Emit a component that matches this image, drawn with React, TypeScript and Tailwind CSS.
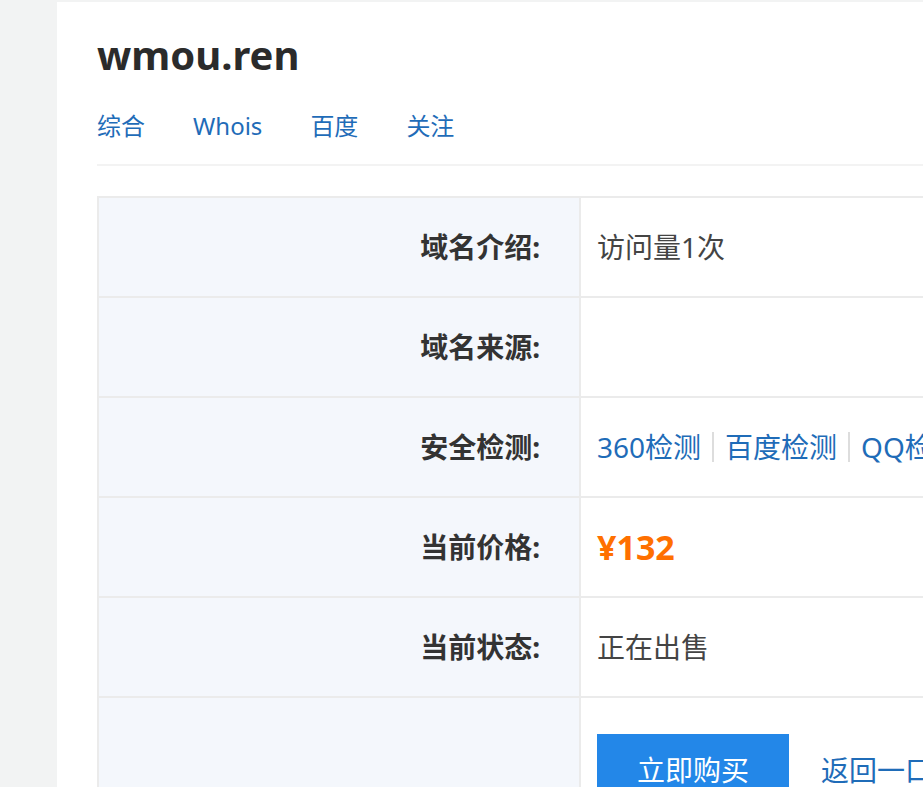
export default function App() {
  const rows: { label: string; value: React.ReactNode }[] = [
    { label: "域名介绍:", value: <span className="text-[#444]">访问量1次</span> },
    { label: "域名来源:", value: null },
    {
      label: "安全检测:",
      value: (
        <span className="flex items-center whitespace-nowrap text-[#1f6cb8]">
          <span>360检测</span>
          <span className="mx-[11px] h-[30px] w-[2px] bg-[#dddddd]"></span>
          <span>百度检测</span>
          <span className="mx-[11px] h-[30px] w-[2px] bg-[#dddddd]"></span>
          <span>QQ检测</span>
        </span>
      ),
    },
    { label: "当前价格:", value: <span className="text-[34px] font-bold text-[#ff7000]">¥132</span> },
    { label: "当前状态:", value: <span className="text-[#444]">正在出售</span> },
  ];
  return (
    <div
      className="min-h-[787px] w-[923px] overflow-hidden bg-[#f2f3f3] pt-[2px] pl-[57px]"
      style={{ fontFamily: '"Noto Sans", "Noto Sans CJK SC", sans-serif' }}
    >
      <div className="min-h-[785px] w-[900px] bg-white pl-[40px] pt-[20px]">
        <h1 className="text-[40px] font-bold leading-[66px] text-[#2b2b2b]">wmou.ren</h1>
        <div className="mt-[20px] flex gap-[48px] text-[24px] leading-[36px] text-[#1f6cb8]">
          <span>综合</span>
          <span>Whois</span>
          <span>百度</span>
          <span>关注</span>
        </div>
        <div className="mt-[20px] h-[2px] bg-[#f3f3f3]"></div>
        <div className="mt-[30px] border-t-2 border-l-2 border-[#ebebeb]">
          {rows.map((r, i) => (
            <div key={i} className="flex h-[100px] border-b-2 border-[#ebebeb]">
              <div className="flex w-[482px] shrink-0 items-center justify-end border-r-2 border-[#ebebeb] bg-[#f4f7fc] pr-[39px] text-[28px] font-bold text-[#333]">
                {r.label}
              </div>
              <div className="flex items-center pl-[16px] text-[28px]">{r.value}</div>
            </div>
          ))}
          <div className="flex h-[100px]">
            <div className="w-[482px] shrink-0 border-r-2 border-[#ebebeb] bg-[#f4f7fc]"></div>
            <div className="flex items-start gap-[32px] whitespace-nowrap pl-[16px] pt-[36px] text-[28px]">
              <button className="h-[72px] w-[192px] bg-[#2387e8] text-white">立即购买</button>
              <span className="leading-[72px] text-[#1f6cb8]">返回一口价</span>
            </div>
          </div>
        </div>
      </div>
    </div>
  );
}
